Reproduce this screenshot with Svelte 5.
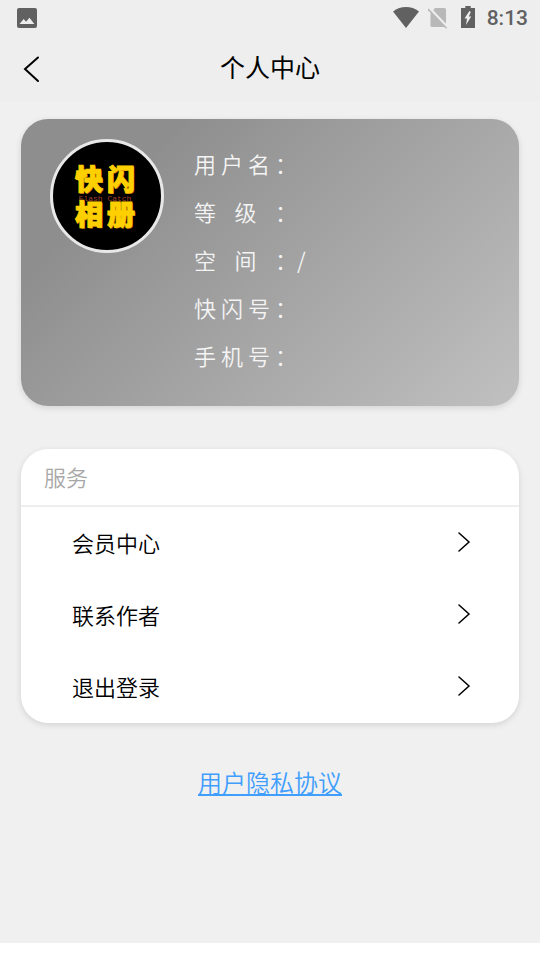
<script>
  const fields = [
    { label: '用户名：', value: '' },
    { label: '等级：', value: '' },
    { label: '空间：', value: '/' },
    { label: '快闪号：', value: '' },
    { label: '手机号：', value: '' }
  ];
  const services = ['会员中心', '联系作者', '退出登录'];
</script>

<div class="page">
  <header>
    <div class="status">
      <svg width="20" height="20" viewBox="0 0 20 20" aria-hidden="true">
        <rect width="20" height="20" rx="2" fill="#616161" />
        <path d="M2.5 16 L6.7 11 L9 13.7 L12.5 9.7 L17.3 16 Z" fill="#eee" />
      </svg>
      <div class="signals">
        <svg width="26" height="22" viewBox="0 0 26 22" aria-hidden="true">
          <path d="M0 4.5 C7.5 -1.4 18.5 -1.4 26 4.5 L13 21 Z" fill="#616161" />
        </svg>
        <svg class="sim" width="20" height="22" viewBox="0 0 20 22" aria-hidden="true">
          <path d="M7 1 H16.5 Q18 1 18 2.5 V18.5 Q18 20 16.5 20 H4 Q2.5 20 2.5 18.5 V6.5 Z" fill="#b8b8b8" />
          <path d="M1 1 L20 21" stroke="#eee" stroke-width="3" />
          <path d="M0 2 L18.5 21.3" stroke="#b8b8b8" stroke-width="1.6" />
        </svg>
        <svg class="battery" width="14" height="22" viewBox="0 0 14 22" aria-hidden="true">
          <path d="M4.3 0 H9.7 V2 H14 V22 H0 V2 H4.3 Z" fill="#616161" />
          <path d="M8.4 5 L3.5 12.6 H6 L5 19 L10.2 10.5 H7.8 L9.8 6 Z" fill="#eee" />
        </svg>
        <span class="clock">8:13</span>
      </div>
    </div>
    <div class="titlebar">
      <button class="back" aria-label="返回">
        <svg width="18" height="28" viewBox="0 0 18 28" aria-hidden="true">
          <path d="M16 2.5 L3 14 L16 26" fill="none" stroke="#000" stroke-width="2" stroke-linecap="round" />
        </svg>
      </button>
      <h1>个人中心</h1>
    </div>
  </header>

  <main>
    <section class="profile">
      <div class="avatar">
        <span class="brand">快闪</span>
        <span class="tag">Flash Catch</span>
        <span class="brand">相册</span>
      </div>
      <dl>
        {#each fields as field}
          <div class="field">
            <dt>{field.label}</dt>
            <dd>{field.value}</dd>
          </div>
        {/each}
      </dl>
    </section>

    <section class="services">
      <h2>服务</h2>
      {#each services as name}
        <button class="item">
          <span>{name}</span>
          <svg width="14" height="20" viewBox="0 0 14 20" aria-hidden="true">
            <path d="M2 1 L12 10 L2 19" fill="none" stroke="#000" stroke-width="1.5" stroke-linecap="round" />
          </svg>
        </button>
      {/each}
    </section>

    <a class="policy" href="#privacy">用户隐私协议</a>
  </main>
  <div class="system"></div>
</div>

<style>
  .page {
    display: flex;
    flex-direction: column;
    min-height: 100vh;
    background: #f0f0f0;
    color: #000;
    font-family: "Noto Sans CJK SC", sans-serif;
    font-size: 22px;
    font-weight: 350;
  }
  header {
    background: #eee;
  }
  .status {
    display: flex;
    align-items: center;
    justify-content: space-between;
    height: 36px;
    padding: 0 12px 0 17px;
  }
  .signals {
    display: flex;
    align-items: center;
  }
  .sim {
    margin-left: 9px;
  }
  .battery {
    margin: 0 12px 2px 13px;
  }
  .clock {
    color: #616161;
    font-family: Roboto, sans-serif;
    font-size: 21px;
    font-weight: 500;
    line-height: 36px;
  }
  .titlebar {
    display: grid;
    grid-template-columns: 64px 1fr 64px;
    align-items: center;
    height: 65px;
  }
  button {
    margin: 0;
    border: 0;
    background: none;
    color: inherit;
    font: inherit;
    cursor: pointer;
  }
  .back {
    display: flex;
    padding: 0 0 0 22px;
  }
  h1 {
    margin: 0;
    padding-bottom: 5px;
    font-size: 25px;
    font-weight: 400;
    line-height: 60px;
    text-align: center;
  }
  main {
    display: flex;
    flex: 1;
    flex-direction: column;
    padding: 18px 21px;
  }
  .profile {
    display: flex;
    padding: 20px 29px 27px;
    border-radius: 27px;
    background: linear-gradient(135deg, #8e8e8e 20%, #c0c0c0);
    box-shadow: 0 2px 6px rgba(0, 0, 0, 0.12);
  }
  .avatar {
    display: flex;
    flex: none;
    flex-direction: column;
    align-items: center;
    justify-content: center;
    box-sizing: border-box;
    width: 114px;
    height: 114px;
    padding: 0 4px 2px 0;
    border: 3px solid #e8e8e8;
    border-radius: 50%;
    background: #000;
  }
  .brand {
    width: 60px;
    color: #ffd000;
    font-size: 28px;
    font-weight: 900;
    line-height: 20px;
    text-align-last: justify;
    text-shadow: 1px 1px 0 #c8700c;
    -webkit-text-stroke: 1px #ffd000;
  }
  .tag {
    padding-top: 7px;
    color: #a04030;
    font-family: "Liberation Mono", monospace;
    font-size: 8px;
    font-weight: 400;
    line-height: 8px;
  }
  dl {
    margin: 0 0 0 30px;
    color: #f4f4f4;
  }
  .field {
    display: flex;
    line-height: 48px;
  }
  dt {
    width: 103px;
    text-align-last: justify;
  }
  dd {
    margin: 0;
  }
  .services {
    margin-top: 43px;
    border-radius: 27px;
    background: #fff;
    box-shadow: 0 2px 6px rgba(0, 0, 0, 0.12);
  }
  h2 {
    margin: 0;
    padding: 0 23px 2px;
    border-bottom: 2px solid #eee;
    color: #a8a8a8;
    font-size: 22px;
    font-weight: 350;
    line-height: 54px;
  }
  .item {
    display: flex;
    align-items: center;
    justify-content: space-between;
    width: 100%;
    height: 72px;
    padding: 0 48px 2px 51px;
  }
  .policy {
    align-self: center;
    margin-top: 41px;
    color: #409eff;
    font-size: 24px;
    line-height: 36px;
  }
  .system {
    height: 17px;
    background: #fff;
  }
</style>
